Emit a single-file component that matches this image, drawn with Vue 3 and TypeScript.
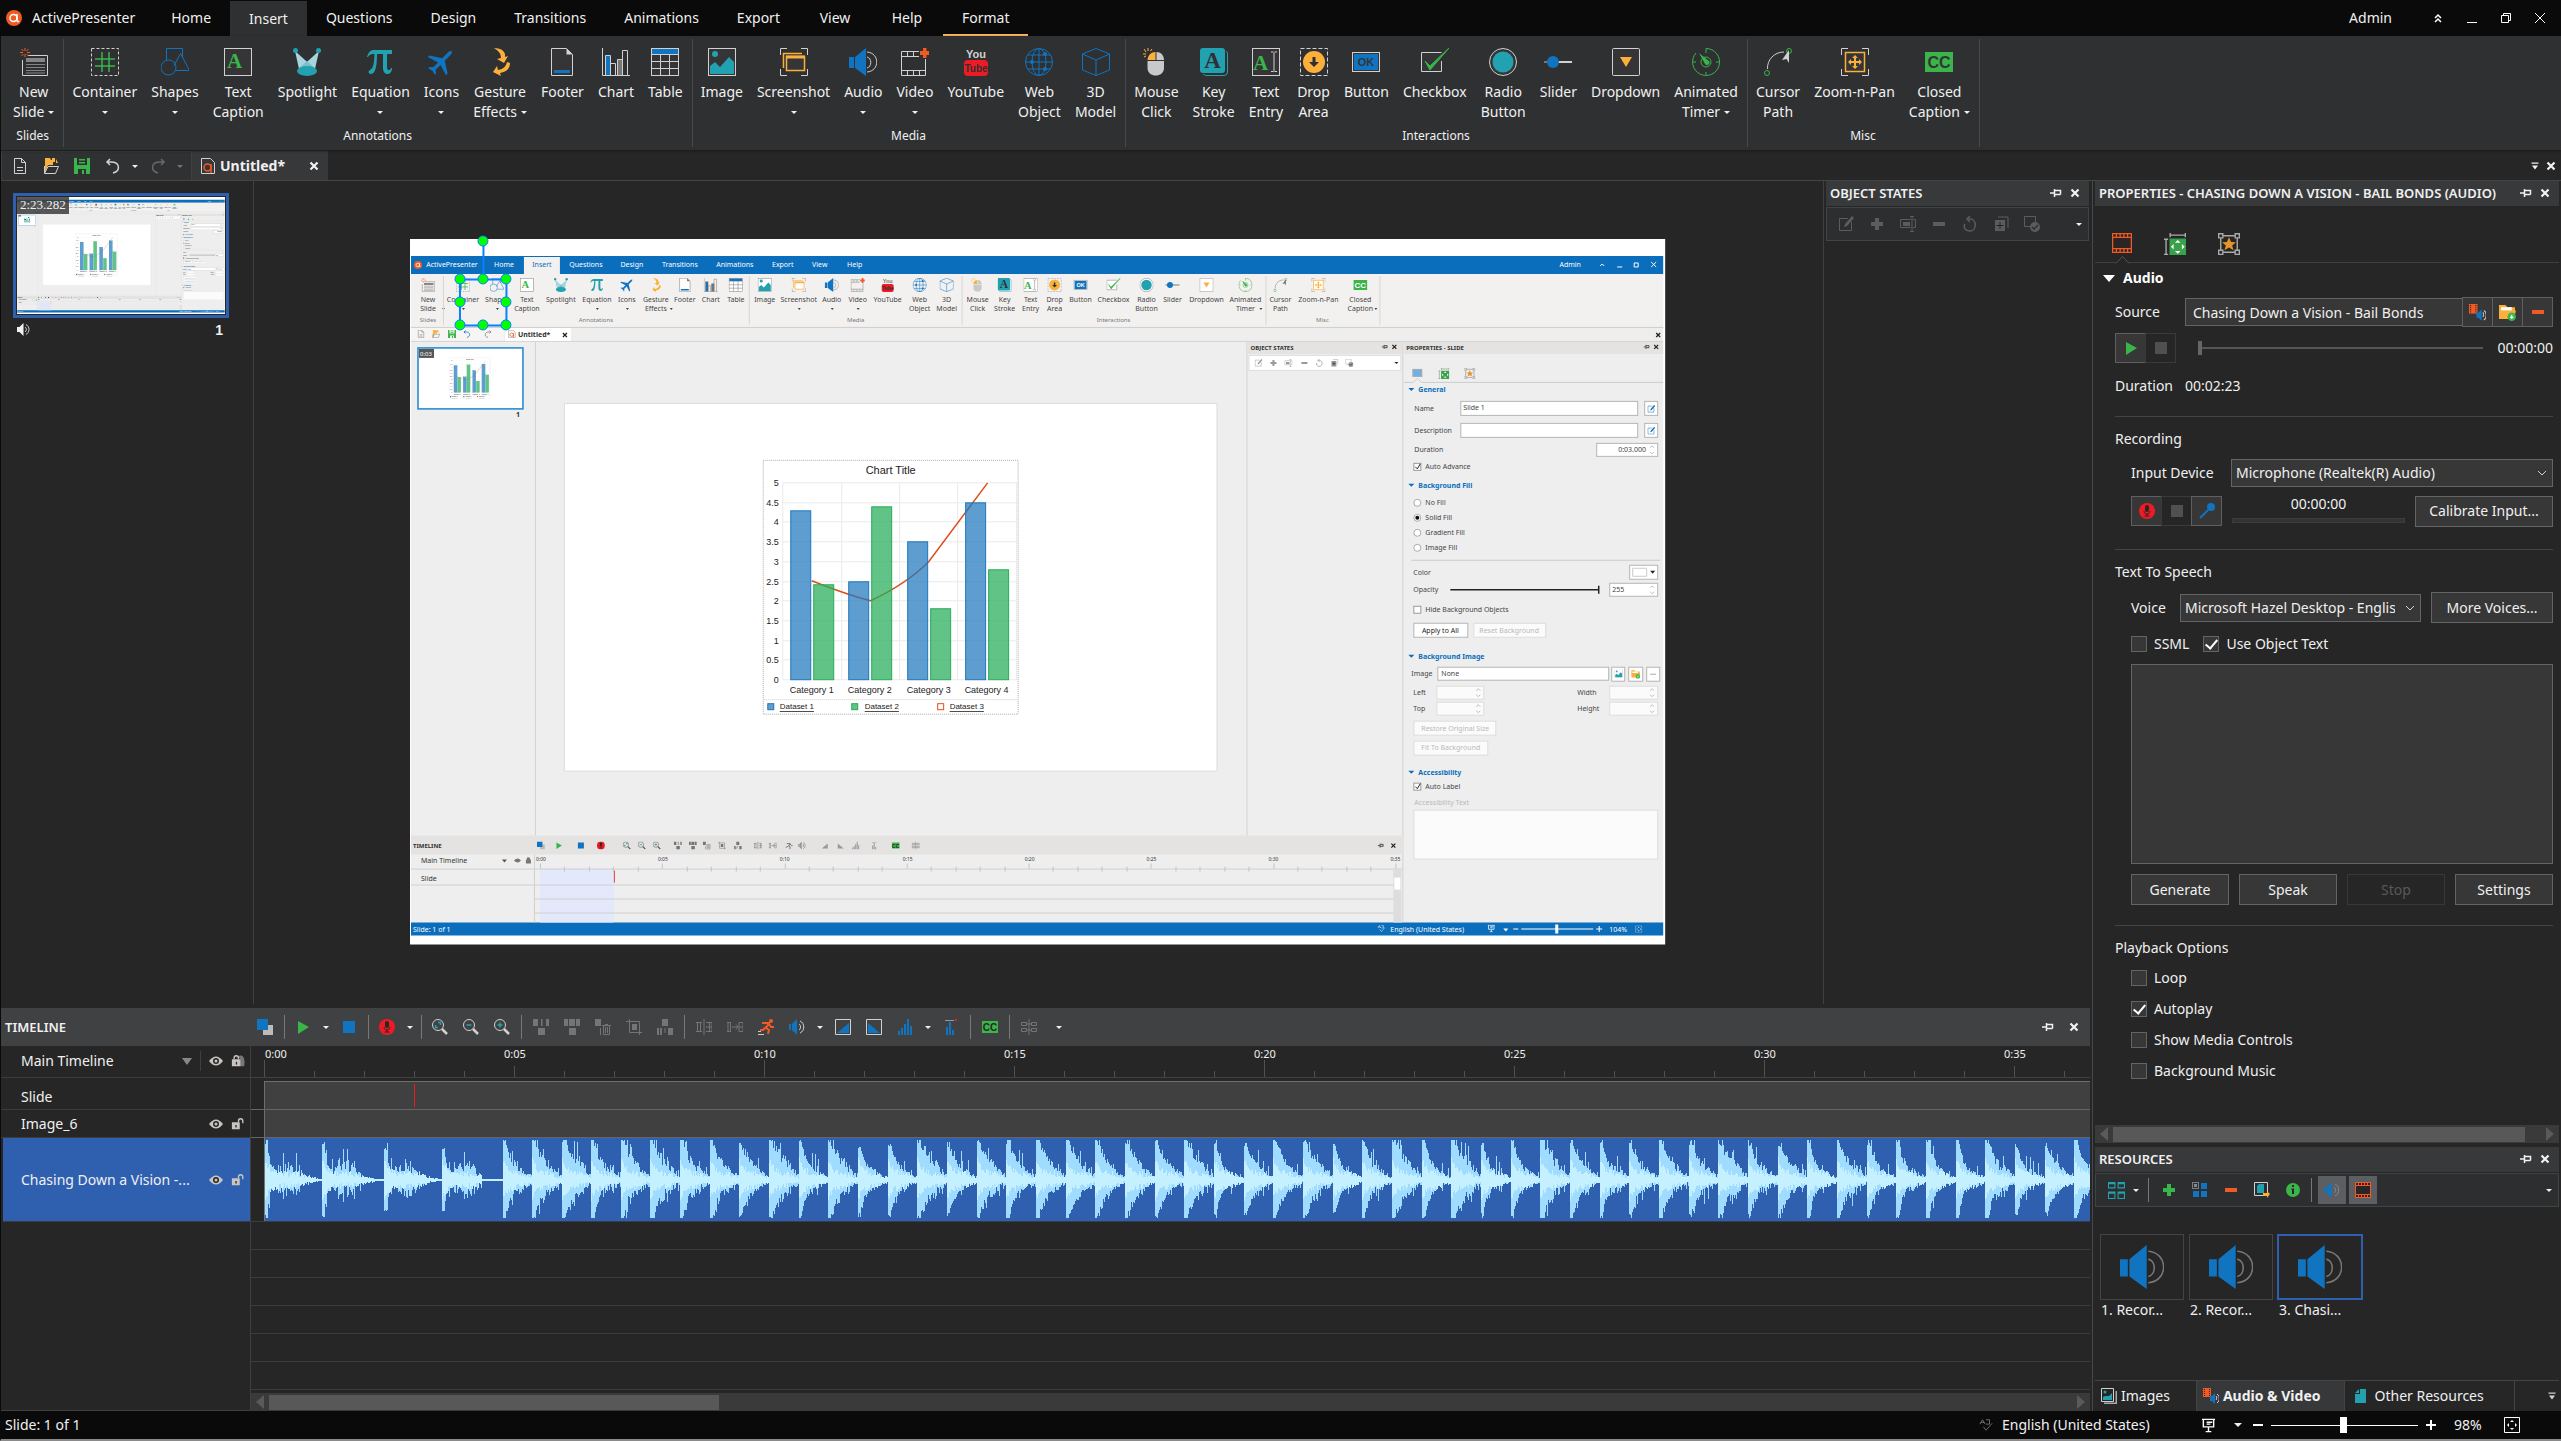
<script setup lang="ts">
import { h, ref } from 'vue'

interface Tool {
  label: string[]
  icon: string
  cx: number
  drop?: boolean
}
interface Group {
  name: string
  cx: number
  end: number
  tools: Tool[]
}

const Ic = (p: { n: string; s?: number }) =>
  h('svg', { width: p.s ?? 18, height: p.s ?? 18, 'aria-hidden': 'true' }, [h('use', { href: '#' + p.n })])
Ic.props = ['n', 's']

const t = (icon: string, cx: number, text: string, drop = false): Tool => ({ label: text.split('|'), icon, cx, drop })

const groups: Group[] = [
  { name: 'Slides', cx: 34, end: 66, tools: [t('r-new', 34, 'New|Slide', true)] },
  {
    name: 'Annotations', cx: 379, end: 692, tools: [
      t('r-container', 107, 'Container', true), t('r-shapes', 175, 'Shapes', true), t('r-caption', 238, 'Text|Caption'),
      t('r-spot', 307, 'Spotlight'), t('r-eq', 380, 'Equation', true), t('r-plane', 441, 'Icons', true),
      t('r-gesture', 500, 'Gesture|Effects', true), t('r-footer', 561, 'Footer'), t('r-chart', 614, 'Chart'), t('r-table', 664, 'Table'),
    ],
  },
  {
    name: 'Media', cx: 909, end: 1127, tools: [
      t('r-image', 723, 'Image'), t('r-shot', 793, 'Screenshot', true), t('r-audio', 861, 'Audio', true), t('r-video', 914, 'Video', true),
      t('r-tube', 976, 'YouTube'), t('r-web', 1040, 'Web|Object'), t('r-cube', 1096, '3D|Model'),
    ],
  },
  {
    name: 'Interactions', cx: 1438, end: 1749, tools: [
      t('r-mouse', 1159, 'Mouse|Click'), t('r-key', 1215, 'Key|Stroke'), t('r-entry', 1267, 'Text|Entry'), t('r-drop', 1317, 'Drop|Area'),
      t('r-button', 1371, 'Button'), t('r-check', 1438, 'Checkbox'), t('r-radio', 1505, 'Radio|Button'), t('r-slider', 1559, 'Slider'),
      t('r-dropdown', 1627, 'Dropdown'), t('r-timer', 1707, 'Animated|Timer', true),
    ],
  },
  {
    name: 'Misc', cx: 1865, end: 1982, tools: [
      t('r-path', 1780, 'Cursor|Path'), t('r-pan', 1856, 'Zoom-n-Pan'), t('r-cc', 1942, 'Closed|Caption', true),
    ],
  },
]

const tabs = ['Home', 'Insert', 'Questions', 'Design', 'Transitions', 'Animations', 'Export', 'View', 'Help', 'Format']
const activeTab = ref('Insert')

/* position of a ribbon item inside the slide's captured window */
const sx = (x: number) => Math.round(x * 0.489 + 1)

const shotTabs: [string, number][] = [
  ['ActivePresenter', 42], ['Home', 94], ['Insert', 132], ['Questions', 176], ['Design', 222], ['Transitions', 270],
  ['Animations', 325], ['Export', 373], ['View', 410], ['Help', 445],
]
const shotHeads: [string, number][] = [['General', 151], ['Background Fill', 247], ['Background Image', 418], ['Accessibility', 534]]
const shotLabels: [string, number, number][] = [
  ['Name', 1005, 170], ['Description', 1005, 192], ['Duration', 1005, 211], ['Auto Advance', 1016, 228], ['No Fill', 1016, 264],
  ['Solid Fill', 1016, 279], ['Gradient Fill', 1016, 294], ['Image Fill', 1016, 309], ['Color', 1004, 334], ['Opacity', 1004, 351],
  ['Hide Background Objects', 1016, 371], ['Image', 1002, 435], ['Left', 1004, 454], ['Top', 1004, 470], ['Width', 1168, 454],
  ['Height', 1168, 470], ['Auto Label', 1016, 548], ['Slide 1', 1054, 169], ['0:03.000', 1209, 211], ['255', 1203, 351], ['None', 1032, 435],
]
const shotBoxes: [number, number, number, number][] = [
  [1051, 162, 178, 15], [1235, 162, 14, 15], [1051, 184, 178, 15], [1235, 184, 14, 15], [1187, 204, 62, 14], [1220, 326, 29, 15],
  [1200, 344, 49, 14], [1004, 384, 55, 15], [1028, 428, 172, 14], [1202, 428, 14, 15], [1219, 428, 15, 15], [1237, 428, 14, 15],
]
const shotFaint: [number, number, number, number][] = [
  [1064, 384, 73, 15], [1027, 447, 48, 14], [1027, 463, 48, 14], [1200, 447, 49, 14], [1200, 463, 49, 14], [1004, 482, 83, 15],
  [1004, 502, 75, 15], [1004, 571, 245, 50],
]
const shotFaintText: [string, number, number][] = [
  ['Reset Background', 1070, 392], ['Restore Original Size', 1012, 490], ['Fit To Background', 1012, 509], ['Accessibility Text', 1005, 564],
]
const shotSpins: [number, number][] = [[1243, 211], [1243, 351], [1069, 454], [1069, 470], [1243, 454], [1243, 470]]
const shotTimeIcons: [string, number][] = [
  ['copies', 131], ['play', 149], ['stop', 171], ['rec', 191], ['zoomfit', 217], ['zoomout', 232], ['zoomin', 247], ['g-before', 268],
  ['g-over', 283], ['g-del', 297], ['g-crop', 312], ['g-after', 328], ['g-split', 348], ['g-join', 363], ['g-run', 379], ['g-speaker', 392],
  ['g-fadein', 415], ['g-fadeout', 431], ['g-vol', 446], ['g-norm', 465], ['cc', 486], ['g-marker', 506],
]

/* chart on the captured slide */
const cats = [{ a: 4.3, b: 2.4 }, { a: 2.5, b: 4.4 }, { a: 3.5, b: 1.8 }, { a: 4.5, b: 2.8 }]
const catX = (i: number) => 402 + Math.round(i * 58.4)
const valY = (v: number) => Math.round(441 - v * 39.4)
const axis = Array.from({ length: 11 }, (_, i) => i / 2)

const timeIcons: string[] = [
  'copies', '|', 'play', 'v', 'stop', '|', 'rec', 'v', '|', 'zoomfit', 'zoomout', 'zoomin', '|', 'g-before', 'g-over', 'g-del', 'g-crop',
  'g-after', '|', 'g-split', 'g-join', 'run', 'speaker', 'v', 'fadein', 'fadeout', 'vol', 'v', 'norm', '|', 'cc', '|', 'g-marker', 'v',
]
const stateIcons = ['edit', 'plus', 'rename', 'minus', 'reset', 'dup', 'apply']
const seconds = Array.from({ length: 37 }, (_, i) => i)
const stamp = (s: number) => '0:' + String(s).padStart(2, '0')

/* waveform: a drum-like envelope repeated every beat, one bar for each pixel */
const beats: number[] = [0, 57, 119, 177, 238, 267, 297, 326]
while (beats[beats.length - 1] < 2400) beats.push(beats[beats.length - 1] + (beats.length % 3 ? 30 : 29))
const noise = (n: number) => {
  const v = Math.sin(n * 127.1 + 311.7) * 43758.5453
  return v - Math.floor(v)
}
function wave(core: boolean): string {
  let d = ''
  let b = 0
  for (let x = 0; x < 2400; x++) {
    while (b + 1 < beats.length && beats[b + 1] <= x) b++
    const age = x - beats[b]
    const slow = b < 4
    const fade = slow ? 3 : 5 + noise(b * 3) * 6
    const hit = 0.84 + 0.2 * noise(b * 7)
    const bump = slow ? Math.exp(-Math.pow((age - 24) / 16, 2)) * 17 : 6 + 8 * noise(b)
    let up = 34 * hit * Math.exp(-Math.max(0, age - 2) / fade) + bump * (0.4 + 0.8 * noise(x))
    let dn = 34 * hit * Math.exp(-Math.max(0, age - 2) / (fade * 0.8)) + bump * (0.3 + 0.8 * noise(x + 999))
    if (core) {
      up = 3 + 14 * Math.exp(-age / 5) + 6 * noise(x + 50)
      dn = 3 + 12 * Math.exp(-age / 5) + 6 * noise(x + 70)
    } else if (noise(x + 5) > 0.85) {
      up += 16 * noise(x + 8)
      dn += 10 * noise(x + 9)
    }
    const room = slow ? Math.max(0.08, 1 - Math.max(0, age - 32) / 26) : Math.max(0.35, 1 - Math.max(0, age - 17) / 20)
    if (x > 216 && x < 238) up = dn = 1
    up = Math.max(1, Math.min(40, up * room))
    dn = Math.max(1, Math.min(38, dn * room))
    d += `M${x} ${Math.round(42 - up)}h1V${Math.round(42 + dn)}h-1z`
  }
  return d
}
const waveOuter = wave(false)
const waveCore = wave(true)

const ssml = ref(false)
const objectText = ref(true)
const playback = ref([
  { id: 'loop', text: 'Loop', on: false },
  { id: 'auto', text: 'Autoplay', on: true },
  { id: 'media', text: 'Show Media Controls', on: false },
  { id: 'music', text: 'Background Music', on: false },
])
const source = ref('Chasing Down a Vision - Bail Bonds')
const position = ref(0)
const zoom = ref(98)
const resources = ['1. Recor...', '2. Recor...', '3. Chasi...']
</script>

<template>
  <div class="app">
    <svg class="defs" aria-hidden="true">
      <symbol id="r-new" viewBox="0 0 28 28"><path d="M8 7.5h19.500v20h-25V12" class="n" /><path d="M6 10h19v4H6z" fill="#858585" /><path d="M6 16.500h19M6 19.500h19M6 22.500h19M6 25h19" stroke="#858585" /><path d="M5 0v3M5 6v3M0 4.500h3M7 4.500h3M1.500 1l2 2M8.500 1l-2 2M1.500 8l2-2M8.500 8l-2-2" stroke="#f15a24" /></symbol>
      <symbol id="r-container" viewBox="0 0 28 28"><rect x=".5" y=".5" width="27" height="27" class="n" stroke-dasharray="3 2" /><path d="M11 4v20M18 4v20M4 11h20M4 18h20" stroke="#39b54a" stroke-width="1.500" /></symbol>
      <symbol id="r-shapes" viewBox="0 0 28 28"><path d="M5.500 12V.5h16V10M19.500 5.500l9 17H14.500M13 17.500l6.500-12" class="b" /><circle cx="7.500" cy="19.500" r="7.500" class="b" /></symbol>
      <symbol id="r-caption" viewBox="0 0 28 28"><rect x=".5" y=".5" width="27" height="27" class="n f" /><text x="3" y="20" class="ser" font-size="21" fill="#39b54a">A</text></symbol>
      <symbol id="r-spot" viewBox="0 0 28 28"><path d="M2 3l20 18H6zM26 3L6 21h16z" fill="#a6d5dd" /><path d="M14 13l8 8H6z" fill="#79bfd0" /><ellipse cx="14" cy="23" rx="10" ry="5" fill="#22a2b0" /><circle cx="2.500" cy="2.500" r="2.500" fill="#22a2b0" /><circle cx="25.500" cy="2.500" r="2.500" fill="#22a2b0" /></symbol>
      <symbol id="r-eq" viewBox="0 0 28 28"><path d="M1 9C3 2 6 2 9 2h17v4h-5v13c0 4 3 4 4 1h1c0 8-9 8-9 0V6h-6c0 10-1 20-6 20-3 0-3-3-1-4 4-2 4-8 4.500-16C5 6 4 6 2 9z" fill="#22a2b0" /></symbol>
      <symbol id="r-plane" viewBox="0 0 24 24"><path transform="rotate(45 12 12)" d="M23 17v-2l-9.500-6V1.500C13.500.500 12.700-1 12-1s-1.500 1.500-1.500 2.500V9L1 15v2l9.500-3v6L8 22v1.500l4-1 4 1V22l-2.500-2v-6z" fill="#1074c0" /></symbol>
      <symbol id="r-gesture" viewBox="0 0 28 28"><path d="M8 0c8 0 12 4 11 9l3-1-4 7-7-4 4-1c0-4-2-7-7-10zM24 15c0 6-4 9-10 10l1 3-8-4 4-6 1 4c6-1 8-4 9-8z" fill="#fbb03b" /></symbol>
      <symbol id="r-footer" viewBox="0 0 28 28"><path d="M3.500.5h15l6 6v21h-21z" class="n f" /><path d="M18.500.5l6 6h-6z" fill="currentColor" /><path d="M6 22h16v3H6z" fill="#1074c0" /></symbol>
      <symbol id="r-chart" viewBox="0 0 28 28"><path d="M.5 0v27.500H28M8.500 27V15.500h5V27M20.500 27V2.500h5V27" class="n" /><path d="M3.500 27V7.500h5V27" stroke="currentColor" fill="#1074c0" /><path d="M15.500 27V11.500h5V27" stroke="currentColor" fill="#777" /></symbol>
      <symbol id="r-table" viewBox="0 0 28 28"><rect x=".5" y=".5" width="27" height="27" class="n f" /><path d="M1 1h26v5H1z" fill="#1074c0" /><path d="M9.500 6v21M18.500 6v21M0 6.500h28M0 13.500h28M0 20.500h28" class="n" /></symbol>
      <symbol id="r-image" viewBox="0 0 28 28"><rect x=".5" y=".5" width="27" height="27" class="n f" /><circle cx="7" cy="6" r="3" fill="#22a2b0" /><path d="M2 26V18l5-4 5 5 9-10 5 5v12z" fill="#22a2b0" /></symbol>
      <symbol id="r-shot" viewBox="0 0 28 28"><path d="M.5 7V.5H7M21 .5h6.500V7M27.500 21v6.500H21M7 27.500H.5V21" class="n" /><path d="M3.500 20V5.500H22" stroke="#fbb03b" stroke-width="1.500" fill="none" /><path d="M6.500 8.500h18v14h-18z" class="f" stroke="#fbb03b" stroke-width="1.500" /><path d="M6 7.500h19v3H6z" fill="#fbb03b" /></symbol>
      <symbol id="r-audio" viewBox="0 0 28 28"><path d="M0 9h5v11H0zM6 9L17 0v28L6 20z" fill="#1074c0" /><path d="M18 9c5 1 5 10 0 11M18 4c13 1 13 19 0 20" class="n" /></symbol>
      <symbol id="r-video" viewBox="0 0 28 28"><path d="M18 3.500H.5v24h24V11M.5 8.500H18M.5 22.500h24M6.500 4v4M12.500 4v4M6.500 23v4M12.500 23v4M18.500 23v4" class="n" /><path d="M22 0h3.500v3H29v4h-3.500v3H22V7h-3V3h3z" fill="#f15a24" /></symbol>
      <symbol id="r-tube" viewBox="0 0 28 28"><text x="14" y="10" class="cond" font-size="11" fill="currentColor">You</text><rect x="2" y="12" width="24" height="16" rx="4" fill="#ed1c24" /><text x="14" y="24" class="cond" font-size="10" fill="#2f3032">Tube</text></symbol>
      <symbol id="r-web" viewBox="0 0 28 28"><g class="b"><circle cx="14" cy="14" r="13.500" /><ellipse cx="14" cy="14" rx="7" ry="13.500" /><path d="M14 0v28M0 14h28M3 7h22M3 21h22" /></g><circle cx="7" cy="14" r="2" fill="#1074c0" /><circle cx="20" cy="6" r="2" fill="#1074c0" /><circle cx="20" cy="21" r="2" fill="#1074c0" /></symbol>
      <symbol id="r-cube" viewBox="0 0 28 28"><path d="M14 .5L27.500 6v16L14 27.500.500 22V6zM.5 6L14 12l13.500-6M14 12v15.500" class="b" /></symbol>
      <symbol id="r-mouse" viewBox="0 0 28 28"><path d="M13.500 4v8H5.500C6 7 9 4 13.500 4z" fill="#fbb03b" /><path d="M14.500 4c5 0 7.500 4 7.500 8h-7.500zM5.500 13H22v7c0 10-16.500 10-16.500 0z" fill="#c9c9c9" /><path d="M6 0v3M2 1l2 3M10 1L8.500 3M1 6h3M2 9l2-1" stroke="#fbb03b" /></symbol>
      <symbol id="r-key" viewBox="0 0 28 28"><path d="M3 26c1 1 2 1.500 4 1.500h17q3.500 0 3.500-3.500V6q0-2-1.500-3" fill="none" stroke="#22a2b0" /><rect width="25" height="25" rx="3" fill="#22a2b0" /><text x="12.500" y="20" text-anchor="middle" class="ser" font-size="23" fill="#2f3032">A</text></symbol>
      <symbol id="r-entry" viewBox="0 0 28 28"><rect x=".5" y=".5" width="27" height="27" class="n f" /><text x="1" y="22" class="ser" font-size="21" fill="#39b54a">A</text><path d="M19 4h2.500M22.500 4H25M19 23.500h2.500M22.500 23.500H25M22 4.500v19" class="n" /></symbol>
      <symbol id="r-drop" viewBox="0 0 28 28"><rect x=".5" y=".5" width="27" height="27" class="n" stroke-dasharray="4 2" /><circle cx="14" cy="14" r="11" fill="#fbb03b" /><path d="M12.500 9h3v5H19l-5 5-5-5h3.500z" fill="#2f3032" /></symbol>
      <symbol id="r-button" viewBox="0 0 28 28"><rect x=".5" y="4.500" width="27" height="19" class="n f" /><path d="M2 6h24v16H2z" fill="#1074c0" /><text x="14" y="18" text-anchor="middle" class="sans" font-size="11" fill="var(--ib)">OK</text></symbol>
      <symbol id="r-check" viewBox="0 0 28 28"><path d="M20.500 4.500H.5v19h20V13" class="n f" /><path d="M4 13l5 5L28 0 9 22z" fill="#39b54a" stroke="#39b54a" /></symbol>
      <symbol id="r-radio" viewBox="0 0 28 28"><circle cx="14" cy="14" r="13.500" class="n f" /><circle cx="14" cy="14" r="10.500" fill="#22a2b0" /></symbol>
      <symbol id="r-slider" viewBox="0 0 28 28"><path d="M-2 14h10" stroke="#777" stroke-width="2" /><path d="M14 14h16" stroke="currentColor" stroke-width="2" /><circle cx="9" cy="14" r="6" fill="#1074c0" /></symbol>
      <symbol id="r-dropdown" viewBox="0 0 28 28"><rect x=".5" y=".5" width="27" height="27" rx="1" class="n f" /><path d="M8 9h12l-6 10z" fill="#fbb03b" /></symbol>
      <symbol id="r-timer" viewBox="0 0 28 28"><path d="M14 5V.5A13.500 13.500 0 1 1 4 5M27 14h-3M14 27v-3M1 14h3" class="g" /><circle cx="14" cy="14" r="5" class="g" /><path d="M7 5l10 8a2.500 2.500 0 1 1-4 3z" fill="#39b54a" /></symbol>
      <symbol id="r-path" viewBox="0 0 28 28"><circle cx="3" cy="25" r="2.500" class="g" /><circle cx="25" cy="3" r="2.500" class="g" /><path d="M3.500 21C3 12 10 4 20 4" class="n" /><path d="M25 2v13l-2.500-4-4.500 1z" fill="currentColor" /></symbol>
      <symbol id="r-pan" viewBox="0 0 28 28"><path d="M.5 7V.5H7M21 .5h6.500V7M27.500 21v6.500H21M7 27.500H.5V21" class="n" /><rect x="4.500" y="4.500" width="19" height="19" class="f" stroke="#fbb03b" stroke-width="1.500" /><path d="M14 7l3 3h-2v3h3v-2l3 3-3 3v-2h-3v3h2l-3 3-3-3h2v-3h-3v2l-3-3 3-3v2h3v-3h-2z" fill="#fbb03b" /></symbol>
      <symbol id="r-cc" viewBox="0 0 28 28"><path d="M0 4h28v20H0z" fill="#39b54a" /><text x="14" y="20" text-anchor="middle" class="sans" font-size="16" fill="var(--ib)">CC</text></symbol>

      <symbol id="logo" viewBox="0 0 16 16"><circle cx="8" cy="8" r="8" fill="#f15a24" /><circle cx="7.500" cy="8" r="3.500" fill="none" stroke="#fff" stroke-width="1.500" /><path d="M11 4v6c0 2 1 2 2 1" fill="none" stroke="#fff" stroke-width="1.500" /></symbol>
      <symbol id="caretbar" viewBox="0 0 16 16"><path d="M4 4h8v1.500H4zM4.500 7.500h7L8 12z" fill="currentColor" /></symbol>
      <symbol id="close" viewBox="0 0 16 16"><path d="M4 4l8 8M12 4l-8 8" stroke="currentColor" stroke-width="2.500" /></symbol>
      <symbol id="pin" viewBox="0 0 16 16"><path d="M3 8h4M7.500 4v8M8 5.500h5.500v4M8 9.500h5.500" fill="none" stroke="currentColor" stroke-width="1.500" /></symbol>
      <symbol id="chev" viewBox="0 0 16 16"><path d="M4 6l4 4 4-4" fill="none" stroke="currentColor" /></symbol>
      <symbol id="doc" viewBox="0 0 16 16"><path d="M2.500.500h7l4 4v11h-11zM9.500.500v4h4M5 9.500h6M5 12.500h6" class="n" /></symbol>
      <symbol id="open" viewBox="0 0 16 16"><path d="M2 0h5l1 2h2v5H5l-3 7z" fill="#fbb03b" /><path d="M9 0h3v4H9zM13 1l2 4h-2z" fill="#fbb03b" /><path d="M1.500 15.500l3.500-7h10.500l-3 7zM1.500 15V8" class="n" /></symbol>
      <symbol id="save" viewBox="0 0 16 16"><path d="M0 0h3v7h10V0h3v16h-4v-5H4v5H0zM5 1h6v1.500H5zM5 4h6v1.500H5zM8 12h2v4H8z" fill="#39b54a" /></symbol>
      <symbol id="undo" viewBox="0 0 16 16"><path d="M5 1L2 4l3 3M2 4h4c9 0 10 9 2 11" fill="none" stroke="currentColor" stroke-width="1.500" /></symbol>
      <symbol id="redo" viewBox="0 0 16 16"><path d="M11 1l3 3-3 3M14 4h-4C1 4 0 13 8 15" fill="none" stroke="currentColor" stroke-width="1.500" /></symbol>
      <symbol id="appdoc" viewBox="0 0 16 16"><path d="M1.500.500h9l4 4v11h-13z" class="n" /><circle cx="7.500" cy="9.500" r="3.500" fill="none" stroke="#f15a24" stroke-width="1.500" /><path d="M11 6v9" stroke="#f15a24" stroke-width="1.500" /></symbol>
      <symbol id="sound" viewBox="0 0 16 16"><path d="M0 5h3l5-5v16l-5-5H0z" fill="currentColor" /><path d="M10 5c2 1 2 5 0 6M11 2c5 2 5 10 0 12" class="n" /></symbol>
      <symbol id="edit" viewBox="0 0 16 16"><path d="M10 2.500H1.500v12h12V6" class="n" /><path d="M14 0l2 2-7 8-3 1 1-3z" fill="currentColor" /></symbol>
      <symbol id="plus" viewBox="0 0 16 16"><path d="M6 2h4v4h4v4h-4v4H6v-4H2V6h4z" fill="currentColor" /></symbol>
      <symbol id="minus" viewBox="0 0 16 16"><path d="M2 6h12v4H2z" fill="currentColor" /></symbol>
      <symbol id="rename" viewBox="0 0 16 16"><path d="M11 3.500H.500v8H11M13 3.500h2.500v8H13M10 .500h4M10 15.500h4M12 0v16" class="n" /><path d="M3 6h7v4H3z" fill="currentColor" /></symbol>
      <symbol id="reset" viewBox="0 0 16 16"><path d="M8 0L5 3l3 3M5 3h3c7 0 7 12 0 12-5 0-7-4-5-7" fill="none" stroke="currentColor" stroke-width="1.500" /></symbol>
      <symbol id="dup" viewBox="0 0 16 16"><path d="M5 1h10v11" class="n" /><path d="M2 4h10v11H2z" fill="currentColor" /><path d="M7 6v7M3.500 9.500h7" stroke="#222" /></symbol>
      <symbol id="apply" viewBox="0 0 16 16"><path d="M11.500 6V.500H.500v10H6" class="n" /><circle cx="11" cy="11" r="5" fill="currentColor" /><path d="M8 11l2 2 4-4" stroke="#2d2e30" fill="none" stroke-width="1.500" /></symbol>
      <symbol id="film" viewBox="0 0 16 16"><path d="M0 0h16v16H0z" fill="#f15a24" /><path d="M1 4h14v8H1z" fill="#2b2526" /><path d="M1 2h14M1 14h14" stroke="#2b2526" stroke-width="2" stroke-dasharray="2 1" /></symbol>
      <symbol id="sizepos" viewBox="0 0 16 16"><path d="M4 4h12v12H4z" fill="#39a14a" /><path d="M10 5l2 2H8zM10 15l2-2H8zM5 10l2-2v4zM15 10l-2-2v4z" fill="#fff" /><path d="M4 1.500h12M4.500 0v3M15.500 0v3M1.500 4v12M0 4.500h3M0 15.500h3" class="n" /></symbol>
      <symbol id="starbox" viewBox="0 0 16 16"><path d="M.500.500h3v3h-3zM12.500.500h3v3h-3zM.500 12.500h3v3h-3zM12.500 12.500h3v3h-3zM4 2h8M4 14h8M2 4v8M14 4v8" class="n" /><path d="M8 3l1.500 3.500 3.500.200-2.700 2.300 1 3.500L8 10.500l-3.300 2 1-3.500L3 6.700l3.500-.200z" fill="#e8932a" /></symbol>
      <symbol id="play" viewBox="0 0 16 16"><path d="M3 2l11 6-11 7z" fill="#39b54a" /></symbol>
      <symbol id="stop" viewBox="0 0 16 16"><path d="M2 2h12v12H2z" fill="var(--stop, #1074c0)" /></symbol>
      <symbol id="rec" viewBox="0 0 16 16"><circle cx="8" cy="8" r="8" fill="#ed1c24" /><rect x="6" y="2" width="4" height="7" rx="2" fill="#2b2526" /><path d="M5 8c0 4 6 4 6 0M8 11v2M5.500 13h5" fill="none" stroke="#2b2526" /></symbol>
      <symbol id="mic" viewBox="0 0 16 16"><circle cx="12" cy="4" r="4" fill="#1074c0" /><path d="M9 7l-8 8" stroke="#1074c0" stroke-width="2" /></symbol>
      <symbol id="media" viewBox="0 0 16 16"><path d="M0 0h8v9H0z" fill="#f15a24" /><path d="M1.500 1v8M6.500 1v8" stroke="#2b2526" stroke-dasharray="1 1" /><path d="M7 8h2l3-3v11l-3-3H7z" fill="#1074c0" /><path d="M13 8c1 1 1 3 0 4M14 6c3 2 3 7 0 9" class="n" /></symbol>
      <symbol id="folder" viewBox="0 0 16 16"><path d="M0 1h6l2 2h7v3H0zM0 6h16l-2 8H0z" fill="#fbb03b" /><path d="M2 3h10v3H2z" fill="#fff" /><circle cx="12" cy="12" r="4" fill="#39b54a" /><path d="M12 10v3M10.500 12l1.500 1.500 1.500-1.500" stroke="#fff" fill="none" /></symbol>
      <symbol id="grid" viewBox="0 0 16 16"><path d="M.500.500h6v5h-6zM9.500.500h6v5h-6zM.500 9.500h6v6h-6zM9.500 9.500h6v6h-6zM.500 1.500h6M9.500 1.500h6M.500 10.500h6M9.500 10.500h6" fill="none" stroke="#22a2b0" /></symbol>
      <symbol id="selall" viewBox="0 0 16 16"><path d="M.500.500h6v6h-6z" fill="none" stroke="#ccc" stroke-dasharray="1 1" /><path d="M2 2h3v3H2z" fill="#888" /><path d="M9 1h6v6H9zM1 9h6v6H1zM9 9h6v6H9z" fill="#1074c0" /></symbol>
      <symbol id="export" viewBox="0 0 16 16"><path d="M.500.500h13v13H.500z" class="n" /><path d="M5 2h5v9H3V4z" fill="#22a2b0" /><path d="M9 11h4V9l3 3-3 4v-2H9z" fill="#fbb03b" /></symbol>
      <symbol id="info" viewBox="0 0 16 16"><circle cx="8" cy="8" r="7" fill="#39b54a" /><path d="M7 3h2v2H7zM6.500 6.500H9V12H7V8h-.5z" fill="#2b2526" /></symbol>
      <symbol id="speaker" viewBox="0 0 16 16"><path d="M0 5h2v6H0zM3 5l5-5v16l-5-5z" fill="#1074c0" /><path d="M10 5c2 1 2 5 0 6M11 2c5 2 5 10 0 12" class="n" /></symbol>
      <symbol id="g-speaker" viewBox="0 0 16 16"><path d="M0 5h2v6H0zM3 5l5-5v16l-5-5z" fill="#999" /><path d="M10 5c2 1 2 5 0 6M11 2c5 2 5 10 0 12" class="n" /></symbol>
      <symbol id="copies" viewBox="0 0 16 16"><path d="M6 6h10v10H6z" fill="#bbb" /><path d="M0 0h11v11H0z" fill="#1074c0" /></symbol>
      <symbol id="zoomfit" viewBox="0 0 16 16"><circle cx="6" cy="6" r="5.500" class="n" /><path d="M10 10l5 5" stroke="currentColor" stroke-width="2.500" /><path d="M6 3.500h2.500V6M3.500 6v2.500H6" fill="none" stroke="#22a2b0" stroke-width="1.500" /></symbol>
      <symbol id="zoomout" viewBox="0 0 16 16"><circle cx="6" cy="6" r="5.500" class="n" /><path d="M10 10l5 5" stroke="currentColor" stroke-width="2.500" /><path d="M3.500 6h5" stroke="#22a2b0" stroke-width="1.500" /></symbol>
      <symbol id="zoomin" viewBox="0 0 16 16"><circle cx="6" cy="6" r="5.500" class="n" /><path d="M10 10l5 5" stroke="currentColor" stroke-width="2.500" /><path d="M3.500 6h5M6 3.500v5" stroke="#22a2b0" stroke-width="1.500" /></symbol>
      <symbol id="g-before" viewBox="0 0 16 16"><path d="M0 0h5v7H0zM8 0h1.500v7H8zM13 0h3v7h-3zM5 9h7v7H5z" fill="#757575" /></symbol>
      <symbol id="g-over" viewBox="0 0 16 16"><path d="M0 0h4v7H0zM5 0h6v7H5zM12 0h4v7h-4zM5 9h7v7H5z" fill="#757575" /></symbol>
      <symbol id="g-del" viewBox="0 0 16 16"><path d="M0 0h6v7H0z" fill="#757575" /><path d="M8.500 7v8.500h6V7M7 6.500h9M10 5.500h3M10.500 8v6M12.500 8v6M5.500 9v7" fill="none" stroke="#757575" /></symbol>
      <symbol id="g-crop" viewBox="0 0 16 16"><path d="M0 2.500h13.500V16M3.500 0v13.500H16" fill="none" stroke="#757575" /><path d="M6 5h5v6H6z" fill="#757575" /></symbol>
      <symbol id="g-after" viewBox="0 0 16 16"><path d="M5 0h6v7H5zM0 9h2v7H0zM3 9h2v7H3zM11 9h5v7h-5zM7.500 9h1v5h-1z" fill="#757575" /></symbol>
      <symbol id="g-split" viewBox="0 0 16 16"><path d="M0 3.500h6M0 12.500h6M10 3.500h6v9h-6M4.500 3v10M1.500 3v10M13.500 3v10M10 8h6M8 0v16" fill="none" stroke="#757575" /></symbol>
      <symbol id="g-join" viewBox="0 0 16 16"><path d="M0 3.500h4M0 12.500h4M3.500 3v10M1 3v10M12 3.500h4v9h-4zM12 8h4M5 8h6M9 5.500L11 8 9 10.500" fill="none" stroke="#757575" /></symbol>
      <symbol id="run" viewBox="0 0 16 16"><circle cx="13" cy="2" r="2" fill="#f15a24" /><path d="M4 4h7l-3 5 3 2-1 4M8 8l-3 3H2M11 5l2 3h3" fill="none" stroke="#f15a24" stroke-width="2" /><path d="M0 12.500h3M0 15.500h6" stroke="#ccc" /></symbol>
      <symbol id="g-run" viewBox="0 0 16 16"><path d="M4 4h7l-3 5 3 2-1 4M8 8l-3 3H2M11 5l2 3h3" fill="none" stroke="#757575" stroke-width="2" /></symbol>
      <symbol id="fadein" viewBox="0 0 16 16"><path d="M.500.500h15v15H.500z" class="n" /><path d="M14 4v10H2z" fill="#1074c0" /></symbol>
      <symbol id="fadeout" viewBox="0 0 16 16"><path d="M.500.500h15v15H.500z" class="n" /><path d="M2 4v10h12z" fill="#1074c0" /></symbol>
      <symbol id="g-fadein" viewBox="0 0 16 16"><path d="M14 4v10H2z" fill="#999" /></symbol>
      <symbol id="g-fadeout" viewBox="0 0 16 16"><path d="M2 4v10h12z" fill="#999" /></symbol>
      <symbol id="vol" viewBox="0 0 16 16"><path d="M1 12h2v4H1zM4 9h2v7H4zM7 5h2v11H7zM10 0h2v16h-2zM13 7h2v9h-2z" fill="#1074c0" /></symbol>
      <symbol id="g-vol" viewBox="0 0 16 16"><path d="M1 12h2v4H1zM4 9h2v7H4zM7 5h2v11H7zM10 0h2v16h-2zM13 7h2v9h-2z" fill="#999" /></symbol>
      <symbol id="norm" viewBox="0 0 16 16"><path d="M3 8h2v8H3zM6 3h2v13H6zM9 11h2v5H9z" fill="#1074c0" /><path d="M2 1.500h9" stroke="#999" /><path d="M12 0h2v2h-2z" fill="#ed1c24" /></symbol>
      <symbol id="g-norm" viewBox="0 0 16 16"><path d="M3 8h2v8H3zM6 3h2v13H6zM9 11h2v5H9zM2 1h9v1H2z" fill="#999" /></symbol>
      <symbol id="cc" viewBox="0 0 16 16"><path d="M0 2h16v12H0z" fill="#39b54a" /><text x="8" y="12" text-anchor="middle" class="sans" font-size="10" fill="#2b2526">CC</text></symbol>
      <symbol id="g-marker" viewBox="0 0 16 16"><path d="M8 0v16M.500 3.500h5v3h-5zM10.500 3.500h5v3h-5zM.500 9.500h5v3h-5zM10.500 9.500h5v3h-5zM6 5h4M6 11h4" fill="none" stroke="#757575" /></symbol>
      <symbol id="eye" viewBox="0 0 16 16"><path d="M1 8q7-9 14 0-7 9-14 0z" fill="#c8c4c2" /><circle cx="8" cy="8" r="3" fill="#262626" /><circle cx="8" cy="8" r="1.500" fill="#c8c4c2" /></symbol>
      <symbol id="unlock" viewBox="0 0 16 16"><path d="M1 6h9v8H1z" fill="#c8c4c2" /><path d="M8.500 6V5c0-4 5-4 5 0v2" fill="none" stroke="#c8c4c2" stroke-width="1.500" /><path d="M5 9h1.500v3H5z" fill="#262626" /></symbol>
      <symbol id="lock" viewBox="0 0 16 16"><path d="M8 3c5-4 9 2 7 11h-4V6z" fill="#777" /><path d="M1 6h10v8H1z" fill="#c8c4c2" /><path d="M3.500 6V5c0-4 5-4 5 0v1" fill="none" stroke="#c8c4c2" stroke-width="1.500" /><path d="M5.500 9h1.500v3H5.500z" fill="#262626" /></symbol>
      <symbol id="images" viewBox="0 0 16 16"><path d="M15.500 3v12.500H3" fill="none" stroke="#aaa" stroke-width="2" /><path d="M.500.500h12v13H.500z" class="n" /><circle cx="4" cy="4" r="1.500" fill="#22a2b0" /><path d="M2 12V9l2-1 4 0 3-3v7z" fill="#22a2b0" /></symbol>
      <symbol id="other" viewBox="0 0 16 16"><path d="M8 1h6v14H3V6h5zM3 5l4-4v4z" fill="#22a2b0" /></symbol>
      <symbol id="present" viewBox="0 0 16 16"><path d="M1 1.500h14M2.500 2v7.500h11V2M8 10v4.500M5 14.500h6M6 4.500h6M6 6.500h4" class="n" stroke-width="1.500" /></symbol>
      <symbol id="fit" viewBox="0 0 16 16"><path d="M.500.500h15v15H.500z" class="n" /><path d="M8 3l2 2H6zM8 13l2-2H6zM3 8l2-2v4zM13 8l-2-2v4z" fill="currentColor" /></symbol>
      <symbol id="spell" viewBox="0 0 16 16"><path d="M1 7l3-5 3 5M2 5h4M8 2h4v5H8M5 10l3 4 7-8" class="n" /></symbol>
    </svg>

    <header class="titlebar">
      <Ic n="logo" :s="16" />
      <span class="brand">ActivePresenter</span>
      <nav class="tabs">
        <button v-for="name in tabs" :key="name" :class="{ on: name === activeTab, ctx: name === 'Format' }" @click="activeTab = name">{{ name }}</button>
      </nav>
      <span class="user">Admin</span>
      <button class="win" aria-label="Collapse ribbon"><svg width="16" height="16"><path d="M5 8l3-3 3 3M5 12l3-3 3 3" fill="none" stroke="#fff" stroke-width="1.500" /></svg></button>
      <button class="win" aria-label="Minimize"><svg width="16" height="16"><path d="M3 12.500h10" stroke="#fff" /></svg></button>
      <button class="win" aria-label="Restore"><svg width="16" height="16"><path d="M3.500 5.500h7v7h-7zM5.500 5V3.500h7v7H11" fill="none" stroke="#fff" /></svg></button>
      <button class="win" aria-label="Close window"><svg width="16" height="16"><path d="M3 3l10 10M13 3L3 13" stroke="#fff" /></svg></button>
    </header>

    <section class="ribbon">
      <div v-for="g in groups" :key="g.name" class="group">
        <div class="tools">
          <button v-for="x in g.tools" :key="x.icon" class="tool">
            <Ic :n="x.icon" :s="28" />
            <span>{{ x.label[0] }}</span>
            <span v-if="x.label[1]" class="second">{{ x.label[1] }}<i v-if="x.drop" class="tri after" /></span>
            <span v-else-if="x.drop" class="second"><i class="tri" /></span>
          </button>
        </div>
        <div class="gname">{{ g.name }}</div>
      </div>
    </section>

    <div class="docbar">
      <div class="quick">
        <button aria-label="New"><Ic n="doc" :s="16" /></button>
        <button aria-label="Open"><Ic n="open" :s="16" /></button>
        <button aria-label="Save"><Ic n="save" :s="16" /></button>
        <button aria-label="Undo"><Ic n="undo" :s="16" /></button>
        <button class="slim" aria-label="Undo list"><i class="tri" /></button>
        <button class="dim" aria-label="Redo" disabled><Ic n="redo" :s="16" /></button>
        <button class="slim dim" aria-label="Redo list" disabled><i class="tri" /></button>
      </div>
      <div class="doctab"><Ic n="appdoc" :s="16" /><b>Untitled*</b><button aria-label="Close document"><Ic n="close" :s="14" /></button></div>
      <div class="docend"><Ic n="caretbar" :s="14" /><Ic n="close" :s="14" /></div>
    </div>

    <main class="work">
      <div class="left">
        <div class="upper">
          <aside class="slides">
            <div class="thumb">
              <svg viewBox="0 0 1256 706"><use href="#capture" /></svg>
              <span class="len">2:23.282</span>
            </div>
            <div class="meta"><Ic n="sound" :s="13" /><b>1</b></div>
          </aside>

          <section class="canvas">
            <svg class="slide" viewBox="0 0 1256 706">
              <g id="capture">
                <path d="M0 0h1256v706H0z" fill="#fff" />
                <path d="M1 17h1253v679H1z" fill="#eee" />
                <path d="M1 17h1253v18H1zM1 684h1253v13H1z" fill="#0a6ebc" />
                <path d="M114 18h36v17h-36zM1 35h1253v54H1z" fill="#f3f1f0" />
                <use href="#logo" x="4" y="22" width="8" height="8" />
                <text v-for="[name, x] in shotTabs" :key="name" :x="x" y="26" class="c s7" :fill="name === 'Insert' ? '#0a6ebc' : '#fff'">{{ name }}</text>
                <text x="1161" y="26" class="c s7" fill="#fff">Admin</text>
                <path d="M1191 27l2-2 2 2M1208 28h5M1225 24h4v4h-4zM1242 23l5 5M1247 23l-5 5" stroke="#fff" fill="none" />
                <g class="shot-ribbon">
                  <g v-for="g in groups" :key="g.name">
                    <g v-for="x in g.tools" :key="x.icon">
                      <use :href="'#' + x.icon" :x="sx(x.cx) - 7" y="39" width="14" height="14" />
                      <text :x="sx(x.cx)" y="61" class="c s7">{{ x.label[0] }}</text>
                      <text v-if="x.label[1]" :x="sx(x.cx)" y="70" class="c s7">{{ x.label[1] }}</text>
                      <path v-if="x.drop" :d="`M${sx(x.cx) + (x.label[1] ? 14 : -1)} 69h3l-1.500 2z`" fill="#444" />
                    </g>
                    <text :x="sx(g.cx)" y="81" class="c s6" fill="#777">{{ g.name }}</text>
                    <path :d="`M${sx(g.end)}.500 37v49`" stroke="#d8d6d4" />
                  </g>
                </g>
                <path d="M1 88.500h1253" stroke="#cfcfcf" />
                <path d="M1 89h93v13H1z" fill="#f6f5f4" /><path d="M95 89h66v14H95z" fill="#fff" /><path d="M1 102.500h1253" stroke="#d4d4d4" />
                <g color="#777">
                  <use href="#doc" x="7" y="91" width="8" height="8" /><use href="#open" x="22" y="91" width="8" height="8" />
                  <use href="#save" x="38" y="91" width="8" height="8" /><use href="#undo" x="53" y="91" width="8" height="8" color="#0a6ebc" />
                  <use href="#redo" x="74" y="91" width="8" height="8" /><use href="#appdoc" x="98" y="91" width="8" height="8" />
                </g>
                <text x="108" y="96" class="m s7" font-weight="700" fill="#333">Untitled*</text>
                <use href="#close" x="151" y="92" width="8" height="8" color="#222" /><use href="#close" x="1245" y="92" width="8" height="8" color="#222" />
                <path d="M125.500 103v494M837.500 103v494M993.500 103v581" stroke="#d2d2d2" />
                <rect x="8" y="109" width="105" height="61" fill="#fff" stroke="#1c86d1" stroke-width="1.500" />
                <g transform="translate(-17 83) scale(.16)"><use href="#chart" /></g>
                <path d="M9 110h15v9H9z" fill="#555" /><text x="16" y="115" class="c s6" fill="#fff">0:03</text>
                <text x="108" y="176" class="c s7" font-weight="700" fill="#333">1</text>
                <path d="M154.500 164.500h653v368h-653z" fill="#fff" stroke="#dcdcdc" />

                <g id="chart">
                  <path d="M353.500 221.500h255v254h-255z" fill="#fff" stroke="#aaa" stroke-dasharray="1 1" />
                  <text x="481" y="231" class="c ar" font-size="11">Chart Title</text>
                  <g v-for="v in axis" :key="v">
                    <path :d="`M373 ${valY(v)}h234`" stroke="#eaeaea" />
                    <text x="369" :y="valY(v)" class="e ar" font-size="9">{{ v }}</text>
                  </g>
                  <path d="M373 244v197M432 244v197M490 244v197M548 244v197M607 244v197" stroke="#eaeaea" />
                  <path d="M354 461h254" stroke="#ccc" stroke-dasharray="1 1" />
                  <path d="M402 342Q440 357 461 362Q497 345 519 323L578 244" fill="none" stroke="#d9501e" stroke-width="1.500" />
                  <g v-for="(c, i) in cats" :key="i">
                    <rect :x="catX(i) - 21" :y="valY(c.a)" width="20" :height="441 - valY(c.a)" fill="#1f77bc" fill-opacity=".72" stroke="#1f77bc" />
                    <rect :x="catX(i) + 2" :y="valY(c.b)" width="20" :height="441 - valY(c.b)" fill="#26ac59" fill-opacity=".72" stroke="#26ac59" />
                    <text :x="catX(i)" y="451" class="c ar" font-size="9">Category {{ i + 1 }}</text>
                  </g>
                  <rect x="358" y="465" width="6" height="6" fill="#5d9fd2" stroke="#1f77bc" /><rect x="442" y="465" width="6" height="6" fill="#62c488" stroke="#26ac59" /><rect x="528" y="465" width="6" height="6" fill="#fff" stroke="#d9501e" />
                  <text x="370" y="468" class="m ar u" font-size="8">Dataset 1</text><text x="455" y="468" class="m ar u" font-size="8">Dataset 2</text><text x="540" y="468" class="m ar u" font-size="8">Dataset 3</text>
                </g>

                <path d="M838 103h155v12H838zM995 103h259v12H995zM1 597h993v19H1z" fill="#e5e3e1" />
                <path d="M839.500 116.500h152v15h-152z" fill="#fff" stroke="#ddd" />
                <text x="841" y="109" class="m s6 hd">OBJECT STATES</text><text x="997" y="109" class="m s6 hd">PROPERTIES - SLIDE</text><text x="3" y="607" class="m s6 hd">TIMELINE</text>
                <g color="#222">
                  <use v-for="[x, y] in [[971, 104], [1233, 104], [967, 603]]" :key="x" href="#pin" :x="x" :y="y" width="8" height="8" />
                  <use v-for="[x, y] in [[981, 104], [1243, 104], [980, 603]]" :key="x" href="#close" :x="x" :y="y" width="8" height="8" />
                </g>
                <g color="#999"><use v-for="(n, i) in stateIcons" :key="n" :href="'#' + n" :x="845 + Math.round(i * 15.200)" y="120" width="8" height="8" /></g>
                <path d="M985 123h4l-2 2z" fill="#222" />
                <rect x="1003.500" y="130.500" width="9" height="7" fill="#6fb1e4" stroke="#aaa" />
                <g color="#999"><use href="#sizepos" x="1029" y="129" width="11" height="11" /><use href="#starbox" x="1055" y="129" width="11" height="11" /></g>
                <path d="M995 143.500h9l4-4 4 4h242M1002 321.500h249" stroke="#ccc" fill="none" />
                <g v-for="[name, y] in shotHeads" :key="name">
                  <path :d="`M999 ${y - 2}h6l-3 3z`" fill="#0a6ebc" /><text x="1009" :y="y" class="m s7" font-weight="700" fill="#0a6ebc">{{ name }}</text>
                </g>
                <rect v-for="(b, i) in shotBoxes" :key="'b' + i" :x="b[0] + 0.5" :y="b[1] + 0.5" :width="b[2] - 1" :height="b[3] - 1" fill="#fff" stroke="#b5b5b5" />
                <rect v-for="(b, i) in shotFaint" :key="'f' + i" :x="b[0] + 0.5" :y="b[1] + 0.5" :width="b[2] - 1" :height="b[3] - 1" fill="#fbfbfb" stroke="#ddd" />
                <path v-for="[x, y] in shotSpins" :key="x + '/' + y" :d="`M${x - 2} ${y - 2}l2-2 2 2M${x - 2} ${y + 2}l2 2 2-2`" fill="none" stroke="#bbb" />
                <rect v-for="y in [224, 367, 544]" :key="y" x="1004.500" :y="y + 0.5" width="7" height="7" fill="#fff" stroke="#999" />
                <path d="M1006 228l2 2 3-5M1006 548l2 2 3-5" stroke="#222" fill="none" />
                <circle v-for="y in [264, 279, 294, 309]" :key="y" cx="1008" :cy="y" r="3.500" fill="#fff" stroke="#aaa" />
                <circle cx="1008" cy="279" r="2" fill="#111" />
                <text v-for="[name, x, y] in shotLabels" :key="name" :x="x" :y="y" class="m s7" fill="#444">{{ name }}</text>
                <text x="1031" y="392" class="c s7" fill="#222">Apply to All</text>
                <text v-for="[name, x, y] in shotFaintText" :key="name" :x="x" :y="y" class="m s7" fill="#b9b9b9">{{ name }}</text>
                <path d="M1041 351h149M1189.500 347v8" stroke="#222" stroke-width="1.500" />
                <path d="M1241 332h5l-2.500 3z" fill="#222" /><path d="M1223.500 329.500h14v8h-14z" fill="#fff" stroke="#ccc" />
                <use href="#edit" x="1238" y="166" width="8" height="8" color="#0a6ebc" /><use href="#edit" x="1238" y="188" width="8" height="8" color="#0a6ebc" />
                <use href="#r-image" x="1205" y="431" width="9" height="8" color="#999" /><use href="#folder" x="1222" y="431" width="9" height="9" /><path d="M1241 435.500h6" stroke="#aaa" />

                <g color="#555"><use v-for="[n, x] in shotTimeIcons" :key="n" :href="'#' + n" :x="x - 4" y="603" width="8" height="8" /></g>
                <path d="M130 630h74v54h-74z" fill="#e3e8fb" />
                <path d="M1 630.500h993M1 646.500h987M125 660.500h863M125 674.500h863M124.500 616v68" stroke="#d0d0d0" />
                <path d="M204.500 632v12" stroke="#e33" />
                <text v-for="i in 8" :key="i" :x="131 + Math.round((i - 1) * 122.200)" y="620" class="c" font-size="5" fill="#333">{{ stamp((i - 1) * 5) }}</text>
                <path v-for="i in 36" :key="'t' + i" :d="`M${130 + Math.round((i - 1) * 24.450)}.500 ${(i - 1) % 5 ? 628 : 625}v5`" stroke="#c4c4c4" />
                <text x="11" y="622" class="m s7" fill="#333">Main Timeline</text><text x="11" y="640" class="m s7" fill="#333">Slide</text>
                <path d="M92 621h5l-2.500 3z" fill="#555" /><path d="M104 622q4-4 7 0-3 4-7 0zM116 621h5v4h-5zM117 619h3v2h-3z" fill="#777" />
                <path d="M984 631h8v53h-8z" fill="#ddd" /><path d="M985 639h6v12h-6z" fill="#fff" />
                <g fill="#fff" color="#fff">
                  <text x="3" y="691" class="m s7">Slide: 1 of 1</text><text x="981" y="691" class="m s7">English (United States)</text><text x="1200" y="691" class="m s7">104%</text>
                  <use href="#spell" x="968" y="686" width="8" height="8" /><use href="#present" x="1078" y="686" width="8" height="8" /><use href="#fit" x="1226" y="687" width="7" height="7" />
                  <path d="M1094 690h5l-2.500 3zM1104 690h5v1h-5zM1112 690h72v1h-72zM1146 686h3v9h-3zM1187 690h6v1h-6zM1189.500 687.500h1v6h-1z" />
                </g>
              </g>
              <g class="handles">
                <path d="M73.500 2v38M50 40.500h46.500v46H50z" fill="none" stroke="#0a80ff" stroke-width="2" />
                <circle v-for="[x, y] in [[73, 2], [50, 40], [73, 40], [96, 40], [50, 63], [96, 63], [50, 86], [73, 86], [96, 86]]" :key="x + '-' + y" :cx="x" :cy="y" r="5" fill="#0f0" stroke="#0a80ff" />
              </g>
            </svg>
          </section>

          <aside class="states">
            <h2 class="phead">OBJECT STATES<span><Ic n="pin" :s="16" /><Ic n="close" :s="14" /></span></h2>
            <div class="bar dimbar">
              <button v-for="n in stateIcons" :key="n" :aria-label="n" disabled><Ic :n="n" :s="16" /></button>
              <i class="tri end" />
            </div>
          </aside>
        </div>

        <section class="timeline">
          <div class="thead">
            <h2>TIMELINE</h2>
            <div class="ticons">
              <template v-for="(n, i) in timeIcons" :key="i">
                <i v-if="n === '|'" class="sep" />
                <button v-else-if="n === 'v'" class="drop" aria-label="More options"><i class="tri" /></button>
                <button v-else :aria-label="n"><Ic :n="n" :s="16" /></button>
              </template>
            </div>
            <span class="pclose"><Ic n="pin" :s="16" /><Ic n="close" :s="14" /></span>
          </div>
          <div class="tbody">
            <div class="names">
              <div class="row main"><span>Main Timeline</span><svg width="12" height="8"><path d="M1 1h10L6 8z" fill="#888" /></svg><i class="vline" /><Ic n="eye" :s="16" /><Ic n="lock" :s="14" /></div>
              <div class="row sl"><span>Slide</span></div>
              <div class="row im"><span>Image_6</span><Ic n="eye" :s="16" /><Ic n="unlock" :s="14" /></div>
              <div class="row au"><span>Chasing Down a Vision -...</span><Ic n="eye" :s="16" /><Ic n="unlock" :s="14" /></div>
            </div>
            <div class="tracks">
              <div class="ruler">
                <div v-for="s in seconds" :key="s" class="sec" :class="{ five: s % 5 === 0, ten: s % 10 === 0, zero: s === 0 }"><span v-if="s % 5 === 0">{{ stamp(s) }}</span></div>
              </div>
              <div class="lane sl"><div class="clip"><i class="mark" /></div></div>
              <div class="lane im"><div class="clip" /></div>
              <div class="lane au"><svg width="2400" height="83"><path :d="waveOuter" fill="#a0dcff" /><path :d="waveCore" fill="#c5f0ff" /></svg></div>
              <div v-for="i in 6" :key="i" class="lane empty" />
              <div class="hscroll"><i class="al" /><i class="knob" /><i class="ar2" /></div>
            </div>
          </div>
        </section>
      </div>

      <aside class="right">
        <h2 class="phead">PROPERTIES - CHASING DOWN A VISION - BAIL BONDS (AUDIO)<span><Ic n="pin" :s="16" /><Ic n="close" :s="14" /></span></h2>
        <div class="ptabs">
          <button class="cur" aria-label="Audio properties"><Ic n="film" :s="20" /></button><button aria-label="Size and position"><Ic n="sizepos" :s="22" /></button><button aria-label="Animations"><Ic n="starbox" :s="22" /></button>
        </div>
        <h3><svg width="12" height="7"><path d="M0 0h12L6 7z" fill="#fff" /></svg>Audio</h3>
        <div class="props">
          <div class="line src"><label for="src">Source</label><input id="src" v-model="source" type="text" /><button class="sq" aria-label="Pick from resources"><Ic n="media" :s="17" /></button><button class="sq" aria-label="Browse"><Ic n="folder" :s="17" /></button><button class="sq" aria-label="Remove"><Ic n="minus" :s="16" class="red" /></button></div>
          <div class="line player"><button class="sq" aria-label="Play"><Ic n="play" :s="16" /></button><button class="sq off" aria-label="Stop" disabled><Ic n="stop" :s="16" /></button><input v-model="position" type="range" class="seek" aria-label="Position" /><span>00:00:00</span></div>
          <div class="line dur"><span>Duration</span><span>00:02:23</span></div>
          <hr />
          <h4>Recording</h4>
          <div class="sub">
            <div class="line device"><label for="dev">Input Device</label><div class="sel"><select id="dev"><option>Microphone (Realtek(R) Audio)</option></select><Ic n="chev" :s="16" /></div></div>
            <div class="line recrow"><button class="sq" aria-label="Record"><Ic n="rec" :s="16" /></button><button class="sq off" aria-label="Stop recording" disabled><Ic n="stop" :s="16" /></button><button class="sq" aria-label="Microphone"><Ic n="mic" :s="16" /></button><div class="meter"><span>00:00:00</span><i /></div><button class="push cal">Calibrate Input...</button></div>
          </div>
          <hr />
          <h4>Text To Speech</h4>
          <div class="sub">
            <div class="line voice"><label for="voice">Voice</label><div class="sel"><select id="voice"><option>Microsoft Hazel Desktop - English</option></select><Ic n="chev" :s="16" /></div><button class="push more">More Voices...</button></div>
            <div class="line checks"><label class="ck"><input v-model="ssml" type="checkbox" />SSML</label><label class="ck"><input v-model="objectText" type="checkbox" />Use Object Text</label></div>
            <textarea aria-label="Speech text" />
            <div class="four"><button class="push">Generate</button><button class="push">Speak</button><button class="push off" disabled>Stop</button><button class="push">Settings</button></div>
          </div>
          <hr />
          <h4>Playback Options</h4>
          <div class="sub opts"><label v-for="o in playback" :key="o.id" class="ck"><input v-model="o.on" type="checkbox" />{{ o.text }}</label></div>
        </div>
        <div class="hscroll pscroll"><i class="al" /><i class="knob" /><i class="ar2" /></div>

        <section class="resources">
          <h2 class="phead">RESOURCES<span><Ic n="pin" :s="16" /><Ic n="close" :s="14" /></span></h2>
          <div class="bar resbar">
            <button aria-label="View"><Ic n="grid" :s="17" /></button><button class="drop" aria-label="View list"><i class="tri" /></button><i class="sep" />
            <button aria-label="Add"><Ic n="plus" :s="16" class="green" /></button><button aria-label="Select unused"><Ic n="selall" :s="16" /></button><button aria-label="Delete"><Ic n="minus" :s="16" class="red" /></button><button aria-label="Export"><Ic n="export" :s="16" /></button><button aria-label="Information"><Ic n="info" :s="16" /></button><i class="sep" />
            <button class="tog" aria-label="Show audio"><Ic n="speaker" :s="16" /></button><button class="tog" aria-label="Show video"><Ic n="film" :s="16" /></button>
            <i class="tri end" />
          </div>
          <div class="cards">
            <figure v-for="(r, i) in resources" :key="r" :class="{ sel2: i === 2 }"><div><Ic n="r-audio" :s="44" /></div><figcaption>{{ r }}</figcaption></figure>
          </div>
          <div class="rtabs"><button><Ic n="images" :s="16" />Images</button><button class="on"><Ic n="media" :s="16" />Audio &amp; Video</button><button><Ic n="other" :s="16" />Other Resources</button><span><Ic n="caretbar" :s="14" /></span></div>
        </section>
      </aside>
    </main>

    <footer class="status">
      <span>Slide: 1 of 1</span>
      <div class="st">
        <Ic n="spell" :s="14" class="dimic" /><span class="lang">English (United States)</span>
        <button aria-label="Preview"><Ic n="present" :s="15" /></button><i class="tri" />
        <button aria-label="Zoom out" class="zb"><svg width="10" height="10"><path d="M0 4h10v2H0z" fill="#fff" /></svg></button>
        <input v-model="zoom" type="range" min="0" max="200" class="zoom" aria-label="Zoom" />
        <button aria-label="Zoom in" class="zb"><svg width="10" height="10"><path d="M4 0h2v4h4v2H6v4H4V6H0V4h4z" fill="#fff" /></svg></button>
        <span class="pct">{{ zoom }}%</span><button aria-label="Fit to window"><Ic n="fit" :s="16" /></button>
      </div>
    </footer>
  </div>
</template>

<style>
body { background: #262626; }
</style>

<style scoped>
.app {
  --ib: #353436;
  display: flex; flex-direction: column; min-height: 100vh; box-sizing: border-box;
  border-left: 1px solid #0a0a0a; border-bottom: 2px solid #8a8a8a;
  background: #262626; color: #f0f0f0; font: 14px/20px "Noto Sans", "Open Sans", sans-serif;
}
.app * { box-sizing: border-box; }
svg { display: block; flex: none; color: #d2d0d0; overflow: visible; }
svg.defs { display: none; }
.n { fill: none; stroke: currentColor; }
.b { fill: none; stroke: #1074c0; }
.g { fill: none; stroke: #39b54a; }
.f { fill: var(--ib); }
.ser { font-family: "Liberation Serif", serif; font-weight: 700; }
.sans { font-family: "Liberation Sans", sans-serif; font-weight: 700; }
.cond { font-family: "Liberation Sans", sans-serif; font-weight: 700; text-anchor: middle; }
button { border: 0; padding: 0; background: none; color: inherit; font: inherit; display: flex; align-items: center; justify-content: center; flex: none; }
h2, h3, h4, figure { margin: 0; font-size: 14px; font-weight: 400; }
.tri { display: inline-block; flex: none; border: 3px solid transparent; border-top-color: #f0f0f0; border-bottom: 0; }

.titlebar { display: flex; height: 36px; align-items: center; background: #0a0a0a; padding-right: 4px; padding-left: 5px; }
.brand { margin-left: 10px; }
.tabs { display: flex; margin-left: 17px; align-self: stretch; flex: 1; }
.tabs button { padding: 0 19px; min-width: 72px; }
.tabs .on { background: #2f3032; margin-top: 1px; }
.tabs .ctx { border-bottom: 2px solid #fdb45c; padding-top: 2px; }
.user { margin-right: 29px; }
.win { width: 34px; height: 34px; }

.ribbon { display: flex; height: 114px; background: #2f3032; padding: 3px 0; box-shadow: 0 1px 2px #1a1a1a; position: relative; }
.group { display: flex; flex-direction: column; padding: 0 2px 0 1px; border-right: 1px solid #47484a; }
.group:first-child { padding: 0 4px 0 5px; }
.tools { display: flex; height: 88px; padding-top: 9px; }
.tool { flex-direction: column; justify-content: flex-start; padding: 0 7px; }
.group:first-child .tool { padding: 0 5px 0 7px; }
.tool > span { line-height: 20px; display: block; }
.tool > svg + span { margin-top: 6px; }
.second { height: 20px; }
.second .tri { margin-bottom: 3px; }
.second .after { margin-left: 4px; }
.gname { text-align: center; font-size: 12px; line-height: 18px; }

.docbar { display: flex; height: 31px; margin-top: 0; border-bottom: 1px solid #444; padding-top: 1px; }
.quick { display: flex; align-items: center; background: #303133; border: 1px solid #404040; border-bottom: 0; padding: 0 2px; width: 191px; }
.quick button { width: 31px; height: 28px; }
.quick .slim { width: 14px; }
.dim { opacity: .35; }
.doctab { display: flex; align-items: center; width: 136px; background: #37383a; padding: 0 2px 0 8px; }
.doctab b { margin-left: 4px; flex: 1; }
.doctab button { width: 24px; height: 24px; }
.docend { display: flex; gap: 2px; align-items: center; margin-left: auto; padding-right: 3px; }
.doctab button svg, .docend svg, .phead svg, .pclose svg { color: #f2f2f2; }

.work { display: flex; flex: 1; }
.left { flex: 1; min-width: 0; display: flex; flex-direction: column; border-right: 1px solid #47484a; }
.upper { display: flex; flex: 1; padding-bottom: 4px; }
.slides { width: 253px; padding: 12px; border-right: 1px solid #404040; flex: none; }
.thumb { position: relative; width: 216px; border: 3px solid #2f60b0; padding: 1px; }
.thumb svg { width: 100%; height: auto; overflow: hidden; }
.len { position: absolute; left: 1px; top: 1px; width: 52px; height: 17px; background: rgba(60, 60, 60, .85); font: 13px/15px "Liberation Serif", serif; padding-left: 3px; }
.meta { display: flex; justify-content: space-between; align-items: center; padding: 2px 6px 0 4px; width: 216px; }
.meta b { font: 700 14px/20px "Liberation Sans", sans-serif; }
.meta svg { color: #f2f2f2; }
.canvas { flex: 1; display: flex; align-items: center; justify-content: center; min-width: 0; padding-bottom: 1px; }
.slide { width: 80%; height: auto; margin-right: 2px; }
.slide, .thumb { --ib: #fff; }
.shot-ribbon { color: #777; fill: #444; --ib: #fff; }
.s7 { font-size: 7px; }
.s6 { font-size: 6px; }
.hd { font-weight: 700; fill: #333; }
.c { text-anchor: middle; dominant-baseline: central; }
.m { dominant-baseline: central; }
.e { text-anchor: end; dominant-baseline: central; }
.ar { font-family: "Liberation Sans", sans-serif; fill: #222; }
.u { text-decoration: underline; }
.states { width: 269px; flex: none; border-left: 1px solid #404040; padding: 0 3px 0 2px; }

.phead { display: flex; align-items: center; height: 25px; background: #38393b; font-size: 13px; line-height: 18px; font-weight: 600; padding: 0 7px 2px 4px; white-space: nowrap; }
.phead span, .pclose { margin-left: auto; display: flex; gap: 5px; align-items: center; }
.bar { display: flex; align-items: center; height: 34px; margin-top: 1px; border: 1px solid #3f4444; background: #2d2e30; padding: 0 3px; }
.bar button { width: 31px; height: 28px; }
.bar .end { margin-left: auto; margin-right: 3px; }
.dimbar svg { color: #5c5c5e; }

.timeline { display: flex; flex-direction: column; flex: none; margin-right: 2px; }
.thead { display: flex; height: 38px; align-items: center; background: #404143; padding: 0 9px 0 4px; }
.thead h2 { width: 244px; font-size: 13px; font-weight: 600; }
.ticons { display: flex; align-items: center; }
.ticons button { width: 31px; height: 28px; }
.drop, .ticons .drop { width: 15px; }
.ticons .drop:last-child { margin-left: 7px; }
.ticons .sep { margin: 0 3px 0 4px; }
.ticons .sep + button { width: 30px; }
.ticons .sep:nth-child(n + 13) + button { width: 31px; }
.sep { width: 1px; height: 24px; background: #77787a; margin: 0 3px; flex: none; }
.pclose { gap: 12px; }
.tbody { display: flex; height: 365px; }
.names { width: 250px; flex: none; border-right: 1px solid #404040; border-bottom: 1px solid #404040; }
.row { display: flex; align-items: center; padding-left: 20px; padding-right: 5px; border-bottom: 1px solid #3c3c3c; gap: 7px; }
.row span { flex: 1; white-space: nowrap; }
.main { height: 32px; padding-bottom: 2px; }
.row.sl { height: 32px; padding-top: 6px; }
.row.im { height: 28px; }
.row.au { height: 84px; background: #2f60b0; margin-left: 2px; padding-left: 18px; }
.vline { width: 1px; height: 20px; background: #404040; }
.tracks { flex: 1; min-width: 0; overflow: hidden; position: relative; }
.ruler { display: flex; height: 32px; padding-left: 13px; border-bottom: 1px solid #404040; align-items: flex-end; }
.sec { width: 50px; height: 6px; border-left: 1px solid #505050; flex: none; position: relative; }
.five { height: 11px; }
.ten { height: 17px; }
.sec span { position: absolute; left: -20px; width: 40px; text-align: center; bottom: 15px; font-size: 11px; line-height: 16px; }
.zero span { left: 0; text-align: left; }
.lane { padding-left: 13px; border-bottom: 1px solid #3c3c3c; }
.lane.sl { height: 32px; padding-top: 3px; }
.lane.im { height: 28px; }
.lane.au { height: 84px; }
.lane.au svg { background: #2f60b0; border-left: 1px solid #777; overflow: hidden; }
.clip { height: 100%; background: #404040; border-left: 1px solid #6e6e6e; }
.lane.sl, .lane.im { border-bottom-color: #666; }
.lane.sl .clip { border-top: 1px solid #6e6e6e; }
.mark { display: block; width: 1px; height: 23px; margin-left: 149px; background: #ed1c24; position: relative; top: 2px; }
.lane.empty { height: 28px; }
.hscroll { display: flex; align-items: center; height: 18px; background: #3a3a3a; padding: 0 5px; margin-top: 3px; }
.al, .ar2 { border: 7px solid transparent; border-right: 8px solid #5a5a5a; border-left: 0; flex: none; }
.ar2 { border-left: 8px solid #5a5a5a; border-right: 0; margin-left: auto; }
.knob { width: 450px; height: 15px; background: #585858; margin-left: 5px; }

.right { width: 468px; flex: none; display: flex; flex-direction: column; padding: 0 2px; }
.ptabs { display: flex; gap: 32px; padding: 27px 17px 0; height: 57px; border-bottom: 1px solid #404040; align-items: flex-start; }
.ptabs svg { color: #aaa; }
.ptabs .cur { position: relative; }
.cur::after { content: ''; position: absolute; left: 5px; top: 25px; width: 10px; height: 10px; border: solid #505050; border-width: 1px 0 0 1px; background: #262626; rotate: 45deg; clip-path: polygon(0 0, 100% 0, 0 100%); }
h3 { display: flex; align-items: center; gap: 8px; height: 30px; padding-left: 8px; font-weight: 700; color: #fff; }
.props { flex: 1; padding: 4px 6px 0 20px; }
.line { display: flex; align-items: center; }
.sq { width: 31px; height: 30px; border: 1px solid #5e5f61; background: #373737; margin-left: -1px; }
.sq.off { background: #262626; border-color: #3a3a3a; --stop: #505050; }
input[type='text'], select, textarea { border: 1px solid #636466; background: #373737; color: #f0f0f0; font: inherit; padding: 0 7px; border-radius: 0; }
.src label { width: 70px; }
.src input { flex: 1; min-width: 0; height: 28px; }
.red { color: #f15a24; }
.green { color: #39b54a; }
.player { margin-top: 6px; }
.player .sq:first-child { margin-left: 0; }
input[type='range'] { appearance: none; background: none; margin: 0; height: 16px; }
.player .seek { flex: 1; margin: 0 14px 0 22px; }
.seek::-webkit-slider-runnable-track { height: 2px; background: #555; }
.seek::-webkit-slider-thumb { appearance: none; width: 4px; height: 14px; margin-top: -6px; background: #666; }
.dur { margin-top: 13px; gap: 12px; }
hr { border: 0; border-top: 1px solid #444; margin: 20px 0 0; }
h4 { margin-top: 12px; line-height: 20px; }
.sub { padding-left: 16px; }
.device { margin-top: 10px; }
.device label { width: 100px; }
.sel { position: relative; flex: 1; height: 28px; }
.sel select { appearance: none; width: 100%; height: 28px; padding: 0 25px 0 4px; }
.sel svg { position: absolute; right: 3px; top: 6px; pointer-events: none; }
.recrow { margin-top: 8px; }
.recrow .sq:first-child { margin-left: 0; }
.meter { flex: 1; margin: 0 10px; text-align: center; line-height: 20px; height: 34px; }
.meter i { display: block; height: 5px; background: #333; border: 1px solid #3c3c3c; margin-top: 4px; }
.recrow { height: 32px; }
.push { height: 31px; border: 1px solid #636466; background: #373737; }
.push.off { background: #262626; border-color: #383838; color: #58585a; }
.cal { width: 138px; }
.sub + hr { margin-top: 22px; }
.voice { margin-top: 10px; gap: 10px; }
.voice label { width: 39px; }
.voice select { text-overflow: clip; }
.more { width: 122px; }
.checks { margin-top: 11px; gap: 14px; }
.ck { display: flex; align-items: center; gap: 7px; height: 20px; }
input[type='checkbox'] { appearance: none; width: 16px; height: 16px; margin: 0; border: 1px solid #636466; background: #373737; display: grid; place-items: center; }
input[type='checkbox']:checked::after { content: ''; width: 5px; height: 10px; border: solid #fff; border-width: 0 2px 2px 0; rotate: 40deg; margin-top: -3px; }
textarea { display: block; width: 100%; height: 200px; margin-top: 10px; resize: none; }
.four { display: flex; gap: 10px; margin-top: 10px; }
.four .push { flex: 1; }
.sub:has(.four) + hr { margin-top: 20px; }
.opts { display: flex; flex-direction: column; gap: 11px; margin-top: 10px; }
.pscroll { margin-top: 0; }
.pscroll .knob { flex: 1; margin-right: 21px; }
.resources { flex: none; margin-top: 4px; display: flex; flex-direction: column; height: 264px; }
.resources .bar { padding-left: 5px; }
.resources .bar button { width: 31px; }
.resources .bar .drop { width: 15px; margin-left: -4px; }
.resources .bar .drop + .sep { margin: 0 4px 0 5px; }
.resources .bar .tog { width: 28px; background: #5d5e61; margin: 0 0 0 3px; }
.tog svg { color: #888; }
.cards { display: flex; gap: 3px; padding: 27px 4px 0; flex: 1; }
figure { width: 86px; }
figure div { height: 66px; display: flex; align-items: center; justify-content: center; margin: 0 1px; border: 1px solid #444; }
figure svg { color: #777; }
.sel2 div { border: 2px solid #2f60b0; margin: 0; }
figcaption { padding-left: 2px; line-height: 20px; }
.rtabs { display: flex; height: 31px; border-top: 1px solid #444; }
.rtabs button { gap: 4px; padding: 0 26px 0 6px; border-right: 1px solid #444; }
.rtabs .on { background: #37383a; font-weight: 700; padding: 0 23px 0 6px; }
.rtabs button:nth-child(3) { padding: 0 30px 0 7px; gap: 7px; }
.rtabs span { margin-left: auto; align-self: center; }

.status { display: flex; align-items: center; justify-content: space-between; height: 28px; background: #0a0a0a; padding: 0 41px 0 4px; }
.st { display: flex; align-items: center; }
.st svg { color: #fff; }
.st .dimic { color: #777; margin-right: 9px; }
.lang { width: 199px; }
.st > .tri { margin: 0 11px 0 18px; border-width: 4px 4px 0; }
.st .zoom { width: 147px; margin: 0 8px; }
.zoom::-webkit-slider-runnable-track { height: 1px; background: #fff; }
.zoom::-webkit-slider-thumb { appearance: none; width: 7px; height: 16px; margin-top: -8px; background: #fff; }
.pct { width: 50px; margin-left: 18px; }
</style>
